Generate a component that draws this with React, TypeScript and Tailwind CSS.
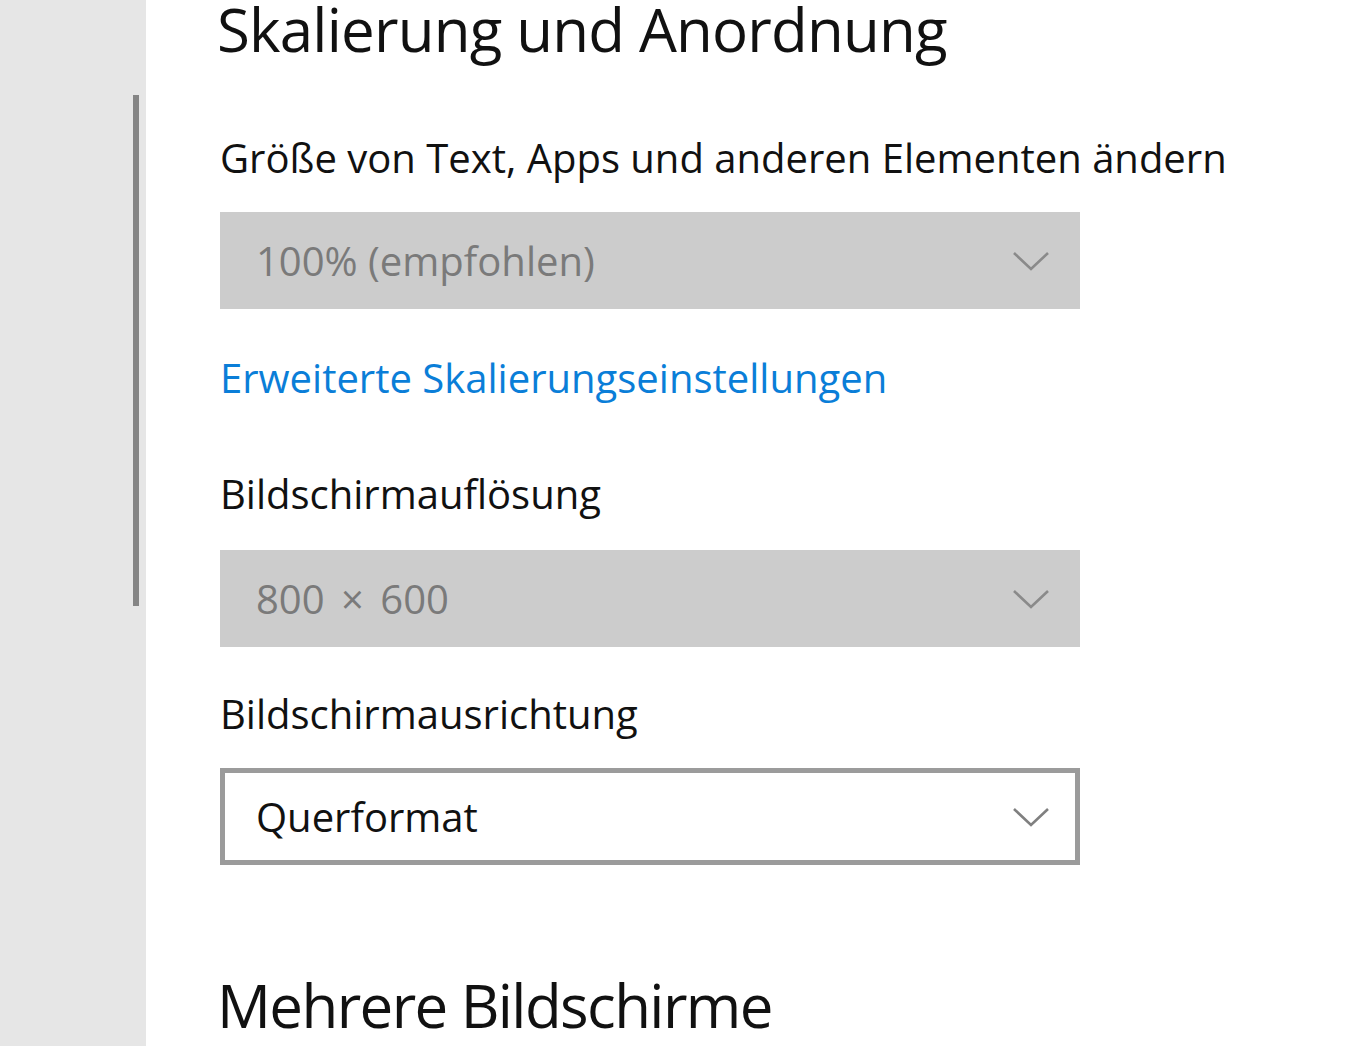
const FONT = "font-['Open_Sans','Noto_Sans',sans-serif]";

function Chevron({ color }: { color: string }) {
  return (
    <svg width="38" height="20" viewBox="0 0 38 20" fill="none">
      <path d="M2 2 L19 18 L36 2" stroke={color} strokeWidth="2.6" />
    </svg>
  );
}

function Select({ value, disabled, wide }: { value: string; disabled?: boolean; wide?: boolean }) {
  if (disabled) {
    return (
      <div className="flex h-[97px] w-[860px] items-center justify-between bg-[#cccccc] pl-[36px] pr-[30px]">
        <span className={`text-[40px] leading-[44px] text-[#7a7a7a] ${wide ? "[word-spacing:6px]" : ""}`}>
          {value}
        </span>
        <Chevron color="#8a8a8a" />
      </div>
    );
  }
  return (
    <div className="flex h-[97px] w-[860px] items-center justify-between border-[5px] border-[#9b9b9b] bg-white pl-[31px] pr-[25px]">
      <span className="text-[40px] leading-[44px] text-[#111111]">{value}</span>
      <Chevron color="#808080" />
    </div>
  );
}

export default function App() {
  return (
    <div className={`flex h-[1046px] w-full overflow-hidden bg-white ${FONT}`}>
      {/* sidebar with scroll thumb */}
      <div className="flex w-[146px] shrink-0 justify-end bg-[#e6e6e6] pr-[7px] pt-[95px]">
        <div className="h-[511px] w-[6px] bg-[#858585]" />
      </div>

      <div className="flex flex-col pl-[74px]">
        <h2 className="-ml-[3px] h-[58px] text-[60px] leading-[58px] tracking-[-0.8px] text-[#111111]">
          Skalierung und Anordnung
        </h2>

        <div className="mt-[78px] h-[44px] text-[40px] leading-[44px] text-[#111111]">
          Größe von Text, Apps und anderen Elementen ändern
        </div>
        <div className="mt-[32px]">
          <Select value="100% (empfohlen)" disabled />
        </div>

        <a className="mt-[47px] h-[44px] text-[40px] leading-[44px] text-[#0a7ed8]" href="#">
          Erweiterte Skalierungseinstellungen
        </a>

        <div className="mt-[72px] h-[44px] text-[40px] leading-[44px] text-[#111111]">Bildschirmauflösung</div>
        <div className="mt-[34px]">
          <Select value="800 × 600" disabled wide />
        </div>

        <div className="mt-[45px] h-[44px] text-[40px] leading-[44px] text-[#111111]">Bildschirmausrichtung</div>
        <div className="mt-[32px]">
          <Select value="Querformat" />
        </div>

        <h2 className="-ml-[3px] mt-[111px] h-[58px] text-[60px] leading-[58px] tracking-[-1.6px] text-[#111111]">
          Mehrere Bildschirme
        </h2>
      </div>
    </div>
  );
}
